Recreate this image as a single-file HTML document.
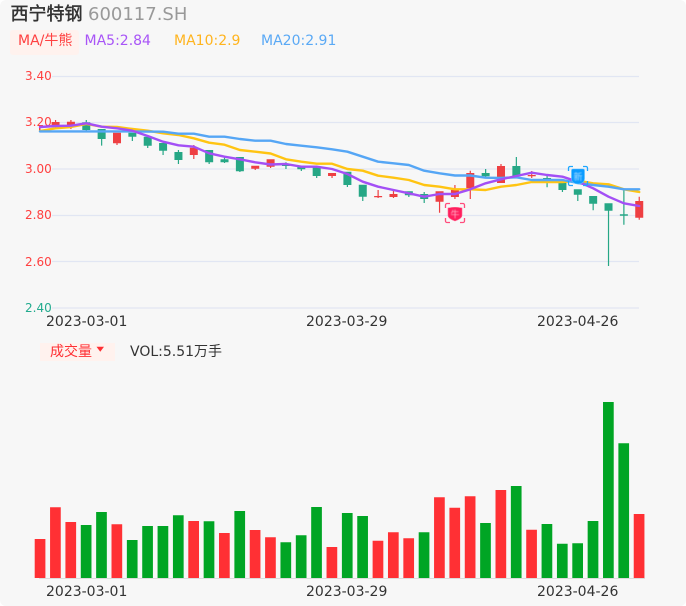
<!DOCTYPE html>
<html><head><meta charset="utf-8"><style>
html,body{margin:0;padding:0;background:#fff}
#r{position:relative;width:686px;height:606px;background:#f7f7f7;border-radius:6px;overflow:hidden;font-family:"DejaVu Sans","WenQuanYi Zen Hei","Noto Sans CJK SC",sans-serif}
#r div{position:absolute;white-space:nowrap}
</style></head><body><div id="r">
<div style="left:10.5px;top:3px;font-size:18px;line-height:24px;color:#333;-webkit-text-stroke:.45px #333">西宁特钢</div>
<div style="left:88px;top:3px;font-size:18px;line-height:24px;color:#999">600117.SH</div>
<div style="left:10px;top:30px;width:69px;height:25px;background:#fff2ee;border-radius:3px"></div>
<div style="left:18px;top:32px;font-size:14px;line-height:19px;color:#ff4040">MA/牛熊</div>
<div style="left:84.5px;top:32px;font-size:14px;line-height:19px;color:#a855f7">MA5:2.84</div>
<div style="left:174px;top:32px;font-size:14px;line-height:19px;color:#ffb41e">MA10:2.9</div>
<div style="left:261px;top:32px;font-size:14px;line-height:19px;color:#5aa9f5">MA20:2.91</div>
<div style="left:25px;top:68px;font-size:12px;line-height:16px;color:#ff4040">3.40</div>
<div style="left:25px;top:114px;font-size:12px;line-height:16px;color:#ff4040">3.20</div>
<div style="left:25px;top:161px;font-size:12px;line-height:16px;color:#ff4040">3.00</div>
<div style="left:25px;top:207px;font-size:12px;line-height:16px;color:#ff4040">2.80</div>
<div style="left:25px;top:254px;font-size:12px;line-height:16px;color:#ff4040">2.60</div>
<div style="left:25px;top:300px;font-size:12px;line-height:16px;color:#22ab8e">2.40</div>
<div style="left:46px;top:313px;font-size:14px;line-height:19px;color:#333">2023-03-01</div>
<div style="left:306px;top:313px;font-size:14px;line-height:19px;color:#333">2023-03-29</div>
<div style="left:537px;top:313px;font-size:14px;line-height:19px;color:#333">2023-04-26</div>
<div style="left:40px;top:343px;width:75px;height:18px;background:#fff2ee"></div>
<div style="left:50px;top:343px;font-size:14px;line-height:19px;color:#ff3034">成交量</div>
<div style="left:130px;top:343px;font-size:14px;line-height:19px;color:#333">VOL:5.51万手</div>
<div style="left:46px;top:583px;font-size:14px;line-height:19px;color:#333">2023-03-01</div>
<div style="left:306px;top:583px;font-size:14px;line-height:19px;color:#333">2023-03-29</div>
<div style="left:537px;top:583px;font-size:14px;line-height:19px;color:#333">2023-04-26</div>
<svg width="686" height="606" viewBox="0 0 686 606" style="position:absolute;left:0;top:0">
<path d="M96.500 346.800h7.500l-3.750 5z" fill="#ff3034"/>
<path d="M52 76.500H639M52 122.500H639M52 169H639M52 215.500H639M52 261.500H639M52 308H639" stroke="#e1e6f3" stroke-width="1.200" fill="none"/>
<g stroke="#ee3f42" stroke-width="1.200" fill="none">
<path d="M55.560 120V129M70.920 120V129M117 143V145M193.800 145V159M255.240 168V170M270.600 166V168M332.040 176V178M378.120 190V198M393.480 191V198M439.560 201V212.700M454.920 185V199M470.280 170.700V199M501 164V183M531.720 171V178M639.240 196.700V219.700"/>
</g>
<path fill="#ee3f42" d="M39 125.500h1.500v6h-1.500zM51.560 122h8v4.700h-8zM66.920 121.700h8v3.300h-8zM113 132.700h8v10.600h-8zM189.800 147.700h8v7.300h-8zM251.240 165.700h8v3h-8zM266.600 159.300h8v7.400h-8zM328.040 173h8v3h-8zM374.120 196h8v1.200h-8zM389.480 194h8v3h-8zM435.560 191.300h8v10.400h-8zM450.920 190h8v7h-8zM466.280 173h8v15.300h-8zM497 166h8v17h-8zM527.720 175h8v1.300h-8zM635.240 201h8v16.700h-8z"/>
<g stroke="#26a785" stroke-width="1.200" fill="none">
<path d="M86.280 120V131M101.640 139V145.600M132.360 136V141M147.720 145V148M163.080 150V155M178.440 150V164M209.160 160V164M224.520 157V163M239.880 170V172M285.960 162.300V169M301.320 168V171M316.680 175V178M347.400 184V187M362.760 196V201M408.840 195V197M424.200 192V203M485.640 169V177M516.360 157V176M547.080 175.300V187.300M562.440 189V192M577.800 194V201M593.160 203V210.300M608.520 210V266M623.880 189.300V224.700"/>
</g>
<path fill="#26a785" d="M82.280 122.300h8V130h-8zM97.640 129h8v10h-8zM128.360 132.700h8v4h-8zM143.720 136.700h8v9h-8zM159.080 143h8v7.700h-8zM174.440 152h8v8h-8zM205.160 150h8v12.300h-8zM220.520 159.300h8v3h-8zM235.880 157h8v14.300h-8zM281.960 165h8v1h-8zM297.320 166.700h8v2.600h-8zM312.680 166.700h8V176h-8zM343.400 171.700h8V185h-8zM358.760 184.700h8v12h-8zM404.840 191.300h8v4h-8zM420.200 194h8v5h-8zM481.640 173h8v3.300h-8zM512.360 166h8v10.300h-8zM543.080 178h8v2h-8zM558.440 181h8v9h-8zM573.800 189.300h8v5.400h-8zM589.160 196h8v7.700h-8zM604.520 203.300h8v7.400h-8zM619.880 214.300h8v1.400h-8z"/>
<g fill="none" stroke-width="2.400" stroke-linejoin="round" stroke-linecap="round">
<polyline stroke="#ffc412" points="40,131 55.560,128.300 70.920,127 86.280,124 101.640,126.700 117,127 132.360,129 147.720,130.700 163.080,133.300 178.440,135 193.800,138.300 209.160,142.700 224.520,144.700 239.880,150 255.240,151.700 270.600,153.500 285.960,159.300 301.320,161.700 316.680,163.700 332.040,163.700 347.400,169 362.760,170.700 378.120,175.700 393.480,177.700 408.840,180 424.200,185 439.560,186.700 454.920,189.300 470.280,189.300 485.640,190 501,186.700 516.360,185 531.720,182 547.080,182 562.440,182 577.800,180.700 593.160,183.300 608.520,184.300 623.880,189.300 639.240,192"/>
<polyline stroke="#55a6f5" points="40,131.400 117,131.400 163.080,131.700 178.440,133.700 193.800,133.700 209.160,136.700 224.520,136.700 239.880,139 255.240,140.700 270.600,140.700 285.960,144 301.320,145.700 316.680,147.300 332.040,149.300 347.400,151.700 362.760,156.700 378.120,161.700 393.480,163.300 408.840,165 424.200,170.700 439.560,173.300 454.920,175.500 470.280,175.500 485.640,177.700 501,178 516.360,177.300 531.720,180 547.080,180 562.440,180 577.800,183 593.160,185 608.520,186.700 623.880,189.300 639.240,189.300"/>
<polyline stroke="#a34ff5" points="40,127 55.560,126 70.920,125.700 86.280,123.300 101.640,126.700 117,128.300 132.360,130.700 147.720,136 163.080,141.700 178.440,145.300 193.800,146.700 209.160,153.300 224.520,156.700 239.880,159.300 255.240,162.300 270.600,164.500 285.960,164 301.320,166.700 316.680,166.700 332.040,169 347.400,174 362.760,181.700 378.120,186.700 393.480,190 408.840,193.300 424.200,196.700 439.560,194 454.920,194 470.280,189.300 485.640,183.300 501,179.300 516.360,176 531.720,172.700 547.080,175 562.440,176.700 577.800,181.700 593.160,188.300 608.520,196.700 623.880,203.300 639.240,206"/>
</g>
<path fill="#ff3034" d="M34.700 539h10.700V578h-10.700zM50.060 507.300h10.700V578h-10.700zM65.420 522h10.700V578h-10.700zM111.500 524.300h10.700V578h-10.700zM188.300 521h10.700V578h-10.700zM219.020 533h10.700V578h-10.700zM249.740 530h10.700V578h-10.700zM265.100 537.300h10.700V578h-10.700zM326.540 547h10.700V578h-10.700zM372.620 540.700h10.700V578h-10.700zM387.980 532.300h10.700V578h-10.700zM403.340 538.300h10.700V578h-10.700zM434.060 497.300h10.700V578h-10.700zM449.420 507.700h10.700V578h-10.700zM464.780 496.300h10.700V578h-10.700zM495.500 490h10.700V578h-10.700zM526.220 529.700h10.700V578h-10.700zM633.740 514h10.700V578h-10.700z"/>
<path fill="#00a524" d="M80.780 525h10.700V578h-10.700zM96.140 512h10.700V578h-10.700zM126.860 540h10.700V578h-10.700zM142.220 526h10.700V578h-10.700zM157.580 526h10.700V578h-10.700zM172.940 515.300h10.700V578h-10.700zM203.660 521.300h10.700V578h-10.700zM234.380 511h10.700V578h-10.700zM280.460 542.300h10.700V578h-10.700zM295.820 535.300h10.700V578h-10.700zM311.180 507h10.700V578h-10.700zM341.900 513h10.700V578h-10.700zM357.260 516h10.700V578h-10.700zM418.700 532.300h10.700V578h-10.700zM480.140 523h10.700V578h-10.700zM510.860 486h10.700V578h-10.700zM541.580 524h10.700V578h-10.700zM556.940 543.700h10.700V578h-10.700zM572.300 543.300h10.700V578h-10.700zM587.660 521h10.700V578h-10.700zM603.020 402h10.700V578h-10.700zM618.380 443.300h10.700V578h-10.700z"/>
<path d="M39 578.500H645" stroke="#dcdcdc" stroke-width="1"/>
<path d="M445.500 208V205a1.500 1.500 0 0 1 1.500-1.500H450M460 203.500h3a1.500 1.500 0 0 1 1.500 1.500v3M464.500 218v3a1.500 1.500 0 0 1-1.500 1.500h-3M450 222.500h-3a1.500 1.500 0 0 1-1.500-1.500v-3" fill="none" stroke="#ff4d7d" stroke-width="1.300"/>
<path d="M448 208q7 -1.500 14 0v7.500q0 3-7 5.500q-7-2.500-7-5.500z" fill="#ff1f5e" stroke="#ff6b93" stroke-width=".6"/>
<text x="455" y="217.500" font-size="9" fill="#ffb6ca" text-anchor="middle" style="filter:blur(.4px)" font-family="'WenQuanYi Zen Hei','Noto Sans CJK SC',sans-serif">牛</text>
<path d="M568.500 171V168a1.500 1.500 0 0 1 1.500-1.500H573M583 166.500h3a1.500 1.500 0 0 1 1.500 1.500v3M587.500 181v3a1.500 1.500 0 0 1-1.500 1.500h-3M573 185.500h-3a1.500 1.500 0 0 1-1.500-1.500v-3" fill="none" stroke="#1ea7ff" stroke-width="1.300"/>
<path d="M571.500 170.500q0-1.500 1.500-1.500h10q1.500 0 1.500 1.500v8q0 5-6.500 5.500q-6.500-.5-6.500-5.500z" fill="#0a9bff" stroke="#5cc0ff" stroke-width=".6"/>
<text x="578" y="180" font-size="9" fill="#a9dcff" text-anchor="middle" style="filter:blur(.4px)" font-family="'WenQuanYi Zen Hei','Noto Sans CJK SC',sans-serif">新</text>
</svg>
</div></body></html>
